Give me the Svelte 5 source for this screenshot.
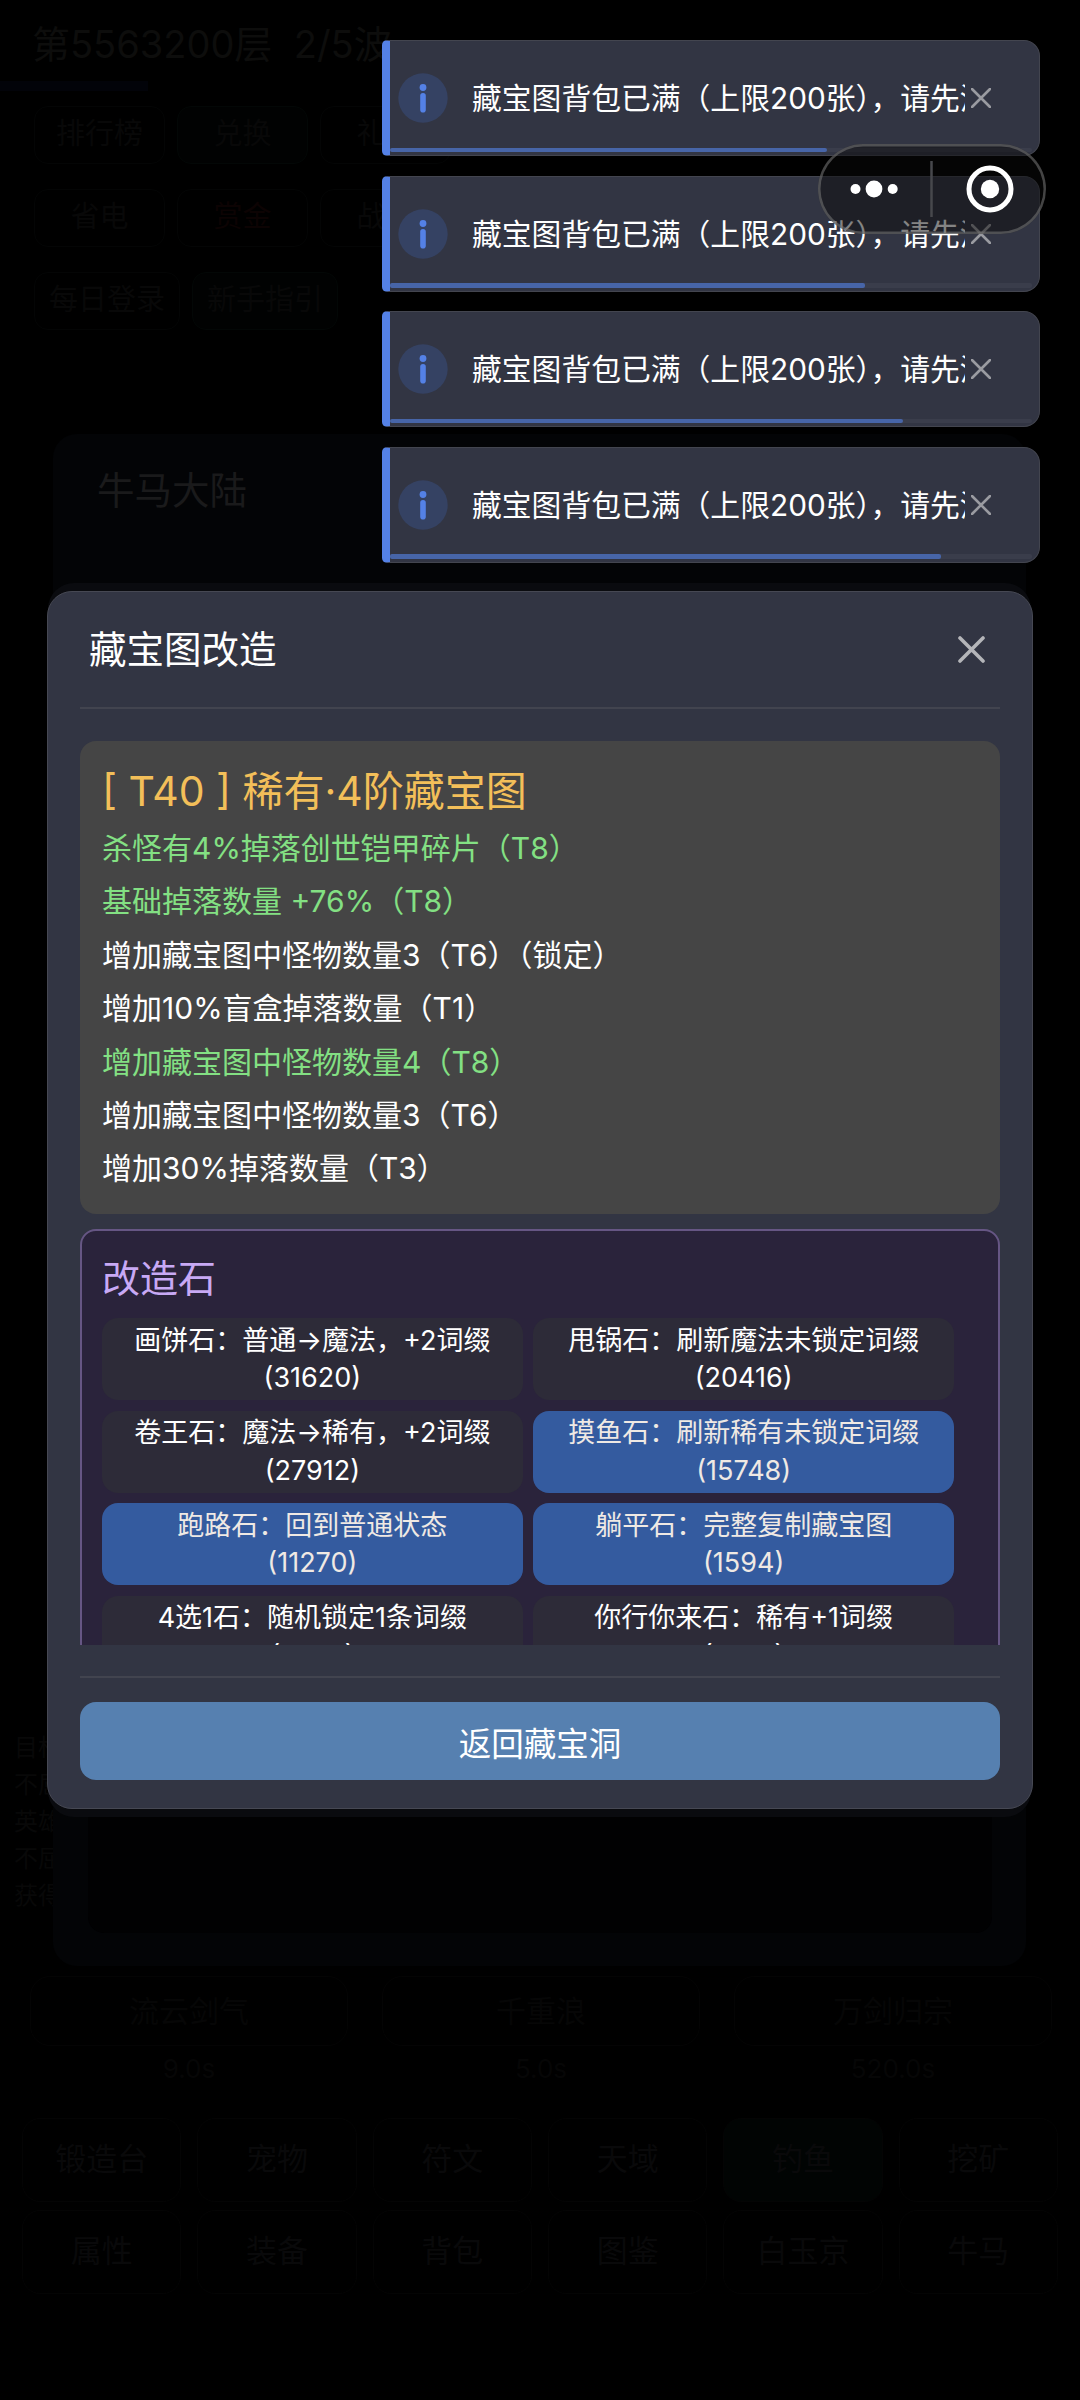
<script lang="ts">
  type Toast = { id: number; text: string; progress: number };
  type Affix = { text: string; good?: boolean };
  type Stone = { name: string; effect: string; count: number; usable?: boolean };

  const toasts: Toast[] = [
    { id: 1, text: "藏宝图背包已满（上限200张），请先清理", progress: 68 },
    { id: 2, text: "藏宝图背包已满（上限200张），请先清理", progress: 74 },
    { id: 3, text: "藏宝图背包已满（上限200张），请先清理", progress: 79.9 },
    { id: 4, text: "藏宝图背包已满（上限200张），请先清理", progress: 85.8 },
  ];

  const affixes: Affix[] = [
    { text: "杀怪有4%掉落创世铠甲碎片（T8）", good: true },
    { text: "基础掉落数量 +76%（T8）", good: true },
    { text: "增加藏宝图中怪物数量3（T6）（锁定）" },
    { text: "增加10%盲盒掉落数量（T1）" },
    { text: "增加藏宝图中怪物数量4（T8）", good: true },
    { text: "增加藏宝图中怪物数量3（T6）" },
    { text: "增加30%掉落数量（T3）" },
  ];

  const stones: Stone[] = [
    { name: "画饼石", effect: "普通→魔法，+2词缀", count: 31620 },
    { name: "甩锅石", effect: "刷新魔法未锁定词缀", count: 20416 },
    { name: "卷王石", effect: "魔法→稀有，+2词缀", count: 27912 },
    { name: "摸鱼石", effect: "刷新稀有未锁定词缀", count: 15748, usable: true },
    { name: "跑路石", effect: "回到普通状态", count: 11270, usable: true },
    { name: "躺平石", effect: "完整复制藏宝图", count: 1594, usable: true },
    { name: "4选1石", effect: "随机锁定1条词缀", count: 9979 },
    { name: "你行你来石", effect: "稀有+1词缀", count: 4991 },
  ];

  const topRows = [
    ["排行榜", "兑换", "礼包"],
    ["省电", "赏金", "战报"],
    ["每日登录", "新手指引"],
  ];
  const logs = ["目标", "不屈", "英雄", "不屈", "获得"];
  const skills = [
    { name: "流云剑气", cd: "9.0s" },
    { name: "千重浪", cd: "5.0s" },
    { name: "万剑归宗", cd: "520.0s" },
  ];
  const nav = [
    "锻造台", "宠物", "符文", "天域", "钓鱼", "挖矿",
    "属性", "装备", "背包", "图鉴", "白玉京", "牛马",
  ];
</script>

<div class="screen">
  <div class="game">
    <div class="stage">第5563200层&nbsp; 2/5波</div>
    <div class="stage-bar"></div>
    <div class="top-rows">
      {#each topRows as row}
        <div class="top-row">
          {#each row as item}
            <span class="chip" class:green={item === "兑换" || item === "新手指引"} class:red={item === "赏金"}>
              {item}
            </span>
          {/each}
        </div>
      {/each}
    </div>
    <div class="logs">
      {#each logs as log}
        <span>{log}</span>
      {/each}
    </div>
    <div class="skills">
      {#each skills as skill}
        <div class="skill">
          <span class="skill-name">{skill.name}</span>
          <span>{skill.cd}</span>
        </div>
      {/each}
    </div>
    <div class="nav">
      {#each nav as item}
        <span class="nav-item" class:green={item === "钓鱼"}>{item}</span>
      {/each}
    </div>
  </div>

  <div class="back-panel">
    <h2>牛马大陆</h2>
    <div class="back-body"></div>
  </div>

  <div class="back-dialog"></div>

  <div class="dialog" role="dialog" aria-label="藏宝图改造">
    <header class="dialog-head">
      <h3>藏宝图改造</h3>
      <button type="button" class="close" aria-label="关闭">
        <svg width="27" height="27" viewBox="0 0 27 27">
          <path d="M2 2 25 25M25 2 2 25" />
        </svg>
      </button>
    </header>

    <div class="dialog-body">
      <section class="map">
        <h4>[ T40 ] 稀有·4阶藏宝图</h4>
        {#each affixes as affix}
          <p class:good={affix.good}>{affix.text}</p>
        {/each}
      </section>

      <section class="stones">
        <h4>改造石</h4>
        <div class="stone-grid">
          {#each stones as stone (stone.name)}
            <button type="button" class="stone" class:usable={stone.usable}>
              <span>{stone.name}：{stone.effect}</span>
              <span class="count">({stone.count})</span>
            </button>
          {/each}
        </div>
      </section>
    </div>

    <footer class="dialog-foot">
      <button type="button" class="back">返回藏宝洞</button>
    </footer>
  </div>

  <div class="toasts">
    {#each toasts as toast (toast.id)}
      <div class="toast">
        <svg class="info" width="50" height="50" viewBox="0 0 50 50">
          <circle cx="25" cy="25" r="24.7" fill="#354263" />
          <circle cx="25" cy="14.5" r="3.4" fill="#5481e6" />
          <rect x="22.2" y="20" width="5.6" height="19.5" rx="2.8" fill="#5481e6" />
        </svg>
        <span class="toast-text">{toast.text}</span>
        <svg class="toast-close" width="20" height="20" viewBox="0 0 20 20">
          <path d="M1 1 19 19M19 1 1 19" />
        </svg>
        <div class="track">
          <div class="fill" style="width: {toast.progress}%"></div>
        </div>
      </div>
    {/each}
  </div>

  <div class="capsule">
    <svg width="228" height="90" viewBox="0 0 228 90">
      <g fill="#fff">
        <circle cx="37.5" cy="45" r="5" />
        <circle cx="56" cy="45" r="8.4" />
        <circle cx="74.7" cy="45" r="5" />
        <circle cx="172" cy="45" r="9.2" />
      </g>
      <path d="M113.5 17V73" stroke="#47484c" stroke-width="2.5" />
      <circle cx="172" cy="45" r="21" fill="none" stroke="#fff" stroke-width="5" />
    </svg>
  </div>
</div>

<style>
  :global(body) {
    background: #000;
  }

  .screen {
    position: relative;
    width: 1080px;
    height: 2400px;
    overflow: hidden;
    background: #000;
    color: #fff;
    font-family: Inter, "Noto Sans CJK SC", sans-serif;
    font-size: 30px;
  }

  h2,
  h3,
  h4,
  p {
    margin: 0;
    font-weight: 400;
  }

  button {
    border: 0;
    padding: 0;
    color: inherit;
    font: inherit;
    cursor: pointer;
  }

  /* dimmed game screen */
  .game {
    display: flex;
    flex-direction: column;
    height: 100%;
    color: #080808;
  }

  .stage {
    padding: 19px 0 0 32px;
    font-size: 38px;
    line-height: 50px;
    color: #0d0d0c;
  }

  .stage-bar {
    width: 148px;
    height: 10px;
    margin-top: 12px;
    background: #020309;
  }

  .top-rows {
    display: flex;
    flex-direction: column;
    gap: 25px;
    padding: 15px 34px 0;
  }

  .top-row {
    display: flex;
    gap: 12px;
  }

  .chip {
    box-sizing: border-box;
    min-width: 131px;
    height: 58px;
    padding: 0 14px;
    border: 1px solid #040505;
    border-radius: 14px;
    font-size: 29px;
    line-height: 54px;
    text-align: center;
  }

  .chip.green {
    border-color: #030706;
    background: #010202;
  }

  .chip.red {
    color: #0c0303;
  }

  .logs {
    display: flex;
    flex-direction: column;
    margin-top: auto;
    padding: 0 14px 62px;
    font-size: 24px;
    line-height: 37px;
  }

  .skills {
    display: grid;
    grid-template-columns: repeat(3, 1fr);
    gap: 34px;
    height: 142px;
    padding: 0 28px 0 30px;
    color: #060606;
    text-align: center;
  }

  .skill {
    display: flex;
    flex-direction: column;
    font-size: 26px;
    line-height: 46px;
  }

  .skill-name {
    height: 68px;
    border: 1px solid #040404;
    border-radius: 20px;
    font-size: 30px;
    line-height: 68px;
  }

  .nav {
    display: grid;
    grid-template-columns: repeat(6, 1fr);
    gap: 8px 16px;
    padding: 0 22px 106px;
  }

  .nav-item {
    box-sizing: border-box;
    height: 84px;
    border: 1px solid #040404;
    border-radius: 18px;
    font-size: 31px;
    line-height: 80px;
    text-align: center;
    color: #09090a;
  }

  .nav-item.green {
    background: #010403;
  }

  /* panels stacked under the open dialog */
  .back-panel {
    position: absolute;
    top: 434px;
    left: 53px;
    box-sizing: border-box;
    width: 973px;
    height: 1532px;
    padding: 32px 34px 33px 35px;
    border-radius: 24px;
    background: #030406;
    display: flex;
    flex-direction: column;
  }

  .back-panel h2 {
    padding-left: 9px;
    font-size: 37.5px;
    line-height: 50px;
    color: #1a1a1b;
  }

  .back-body {
    flex: 1;
    margin-top: 120px;
    border-radius: 16px;
    background: #010102;
  }

  .back-dialog {
    position: absolute;
    top: 583px;
    left: 48px;
    width: 983px;
    height: 1234px;
    border-radius: 26px;
    background: #0a0b0f;
  }

  .dialog {
    position: absolute;
    top: 591px;
    left: 47px;
    box-sizing: border-box;
    width: 986px;
    height: 1218px;
    padding: 0 32px;
    border: 1.5px solid #464853;
    border-radius: 25px;
    background: #323543;
    display: flex;
    flex-direction: column;
  }

  .dialog-head {
    display: flex;
    align-items: center;
    justify-content: space-between;
    box-sizing: border-box;
    height: 117px;
    padding: 0 15px 0 9px;
    border-bottom: 2px solid #42444f;
  }

  .dialog-head h3 {
    font-size: 37.5px;
    line-height: 50px;
  }

  .close {
    display: flex;
    background: none;
  }

  .close path,
  .toast-close path {
    fill: none;
    stroke: #b4b5b9;
    stroke-width: 3.6;
    stroke-linecap: round;
  }

  .dialog-body {
    height: 904px;
    margin-top: 32px;
    overflow: hidden;
  }

  .map {
    box-sizing: border-box;
    height: 473px;
    padding: 22px 22px 0;
    border-radius: 16px;
    background: #454545;
    white-space: nowrap;
  }

  .map h4 {
    font-size: 41px;
    line-height: 56px;
    padding-bottom: 3px;
    color: #f3bf59;
  }

  .map p {
    font-size: 30px;
    line-height: 53.4px;
  }

  .map .good {
    color: #83e083;
  }

  .stones {
    box-sizing: border-box;
    height: 560px;
    margin-top: 15px;
    padding: 21px 44px 0 20px;
    border: 2px solid #665684;
    border-radius: 16px;
    background: #2a233b;
  }

  .stones h4 {
    font-size: 38px;
    line-height: 52px;
    color: #c8a9f5;
  }

  .stone-grid {
    display: grid;
    grid-template-columns: 1fr 1fr;
    gap: 10.6px;
    margin-top: 14px;
  }

  .stone {
    display: flex;
    flex-direction: column;
    align-items: center;
    justify-content: center;
    height: 82px;
    border-radius: 16px;
    background: #2d2b38;
    font-size: 27px;
    line-height: 37.5px;
    white-space: nowrap;
  }

  .stone.usable {
    background: #345b9f;
    color: #efe9e4;
  }

  .dialog-foot {
    margin-top: 31px;
    padding-top: 24px;
    border-top: 2px solid #42444f;
  }

  .back {
    width: 100%;
    height: 78px;
    border-radius: 16px;
    background: #5680b0;
    font-size: 32.5px;
  }

  .toasts {
    position: absolute;
    top: 40px;
    left: 382px;
    width: 658px;
    display: flex;
    flex-direction: column;
    gap: 19.5px;
  }

  .toast {
    position: relative;
    display: flex;
    align-items: center;
    box-sizing: border-box;
    height: 116px;
    padding: 0 48px 0 8px;
    border: 1.5px solid #43454f;
    border-left: 8px solid #5481e6;
    border-radius: 5px 16px 16px 5px;
    background: #323543;
  }

  .info {
    flex: none;
  }

  .toast-text {
    flex: 1;
    margin: 0 6px 0 24px;
    overflow: hidden;
    font-size: 29.8px;
    line-height: 42px;
    white-space: nowrap;
  }

  .toast-close {
    flex: none;
  }

  .toast-close path {
    stroke: #9a9ba1;
    stroke-width: 2.6;
  }

  .track {
    position: absolute;
    right: 7px;
    bottom: 3px;
    left: 0;
    height: 4.5px;
    border-radius: 2px;
    background: #3a3d4b;
  }

  .fill {
    height: 100%;
    border-radius: 2px;
    background: #4765a8;
  }

  .capsule {
    position: absolute;
    top: 144px;
    left: 818px;
    box-sizing: border-box;
    width: 228px;
    height: 90px;
    border-radius: 45px;
    background: rgba(10, 10, 10, 0.5);
    box-shadow: inset 0 0 0 2.5px rgba(120, 120, 120, 0.55);
  }
</style>
